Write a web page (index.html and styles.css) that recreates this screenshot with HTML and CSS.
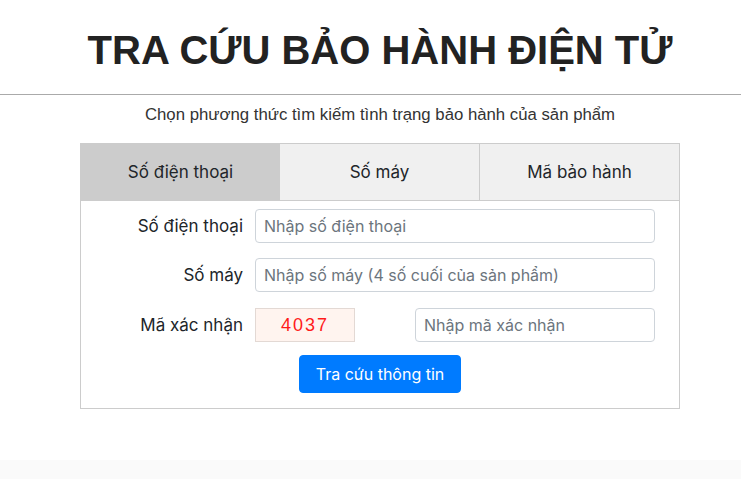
FILE: index.html
```html
<!DOCTYPE html>
<html lang="vi">
<head>
<meta charset="utf-8">
<title>Tra cứu bảo hành điện tử</title>
<link rel="stylesheet" href="styles.css">
</head>
<body>
<header class="header">
  <h1 class="title">TRA CỨU BẢO HÀNH ĐIỆN TỬ</h1>
</header>
<main class="main">
  <p class="subtitle">Chọn phương thức tìm kiếm tình trạng bảo hành của sản phẩm</p>
  <section class="box">
    <nav class="tabs">
      <div class="tab tab-active">Số điện thoại</div>
      <div class="tab">Số máy</div>
      <div class="tab tab-last">Mã bảo hành</div>
    </nav>
    <form class="form">
      <div class="row row-first">
        <label class="label">Số điện thoại</label>
        <input class="input" type="text" placeholder="Nhập số điện thoại">
      </div>
      <div class="row">
        <label class="label">Số máy</label>
        <input class="input" type="text" placeholder="Nhập số máy (4 số cuối của sản phẩm)">
      </div>
      <div class="row row-captcha">
        <label class="label">Mã xác nhận</label>
        <div class="captcha-group">
          <div class="captcha">4037</div>
          <input class="input input-alt" type="text" placeholder="Nhập mã xác nhận">
        </div>
      </div>
      <div class="actions">
        <button class="btn" type="button">Tra cứu thông tin</button>
      </div>
    </form>
  </section>
</main>
<footer class="footer"></footer>
</body>
</html>
```

FILE: styles.css
```css
* { box-sizing: border-box; }
html, body { margin: 0; padding: 0; background: #fff; }
body {
  font-family: "Inter", "Liberation Sans", sans-serif;
  color: #212529;
  height: 479px;
  overflow: hidden;
  display: flex;
  flex-direction: column;
}
.header {
  padding: 26px 0 20px 19px;
  border-bottom: 1px solid #aaaaaa;
}
.title {
  margin: 0;
  text-align: center;
  font-family: "Liberation Sans", Arial, sans-serif;
  font-weight: bold;
  font-size: 40px;
  line-height: 48px;
  color: #222222;
}
.main {
  padding-left: 19px;
  display: flex;
  flex-direction: column;
  align-items: center;
}
.subtitle {
  margin: 8px 0 16px;
  font-family: "Liberation Sans", Arial, sans-serif;
  font-size: 16.75px;
  line-height: 24px;
  color: #333333;
  text-align: center;
}
.box {
  width: 600px;
  border: 1px solid #cccccc;
}
.tabs {
  display: grid;
  grid-template-columns: 199px 199px 200px;
  border-bottom: 1px solid #cccccc;
}
.tab {
  height: 56px;
  display: flex;
  align-items: center;
  justify-content: center;
  background: #f0f0f0;
  font-size: 17px;
  color: #212529;
}
.tab-active { background: #cccccc; }
.tab-last { border-left: 1px solid #cccccc; }
.form {
  display: flex;
  flex-direction: column;
  padding: 8px 24px 15px;
}
.row {
  display: grid;
  grid-template-columns: 1fr 400px;
  column-gap: 12px;
  align-items: center;
  margin-bottom: 16px;
}
.row-first { margin-bottom: 15px; }
.row-captcha { margin-bottom: 13px; }
.label {
  text-align: right;
  font-size: 17px;
  color: #212529;
}
.input {
  height: 34px;
  width: 100%;
  border: 1px solid #ced4da;
  border-radius: 4px;
  padding: 0 8px;
  font-family: "Inter", sans-serif;
  font-size: 16px;
  color: #495057;
  background: #fff;
}
.input::placeholder { color: #6c757d; }
.input-alt { width: 240px; }
.captcha-group {
  display: flex;
  justify-content: space-between;
  align-items: center;
}
.captcha {
  width: 100px;
  height: 34px;
  display: flex;
  align-items: center;
  justify-content: center;
  background: #fff4ef;
  border: 1px solid #e3d9d4;
  font-family: "Liberation Sans", Arial, sans-serif;
  font-size: 18px;
  letter-spacing: 2px;
  color: #ff1a1a;
}
.actions {
  display: flex;
  justify-content: center;
}
.btn {
  height: 38px;
  padding: 0 16px;
  border: 1px solid #007bff;
  border-radius: 4px;
  background: #007bff;
  color: #ffffff;
  font-family: "Inter", sans-serif;
  font-size: 16px;
  line-height: 24px;
}
.footer {
  margin-top: auto;
  height: 19px;
  background: #fafafa;
}
```
